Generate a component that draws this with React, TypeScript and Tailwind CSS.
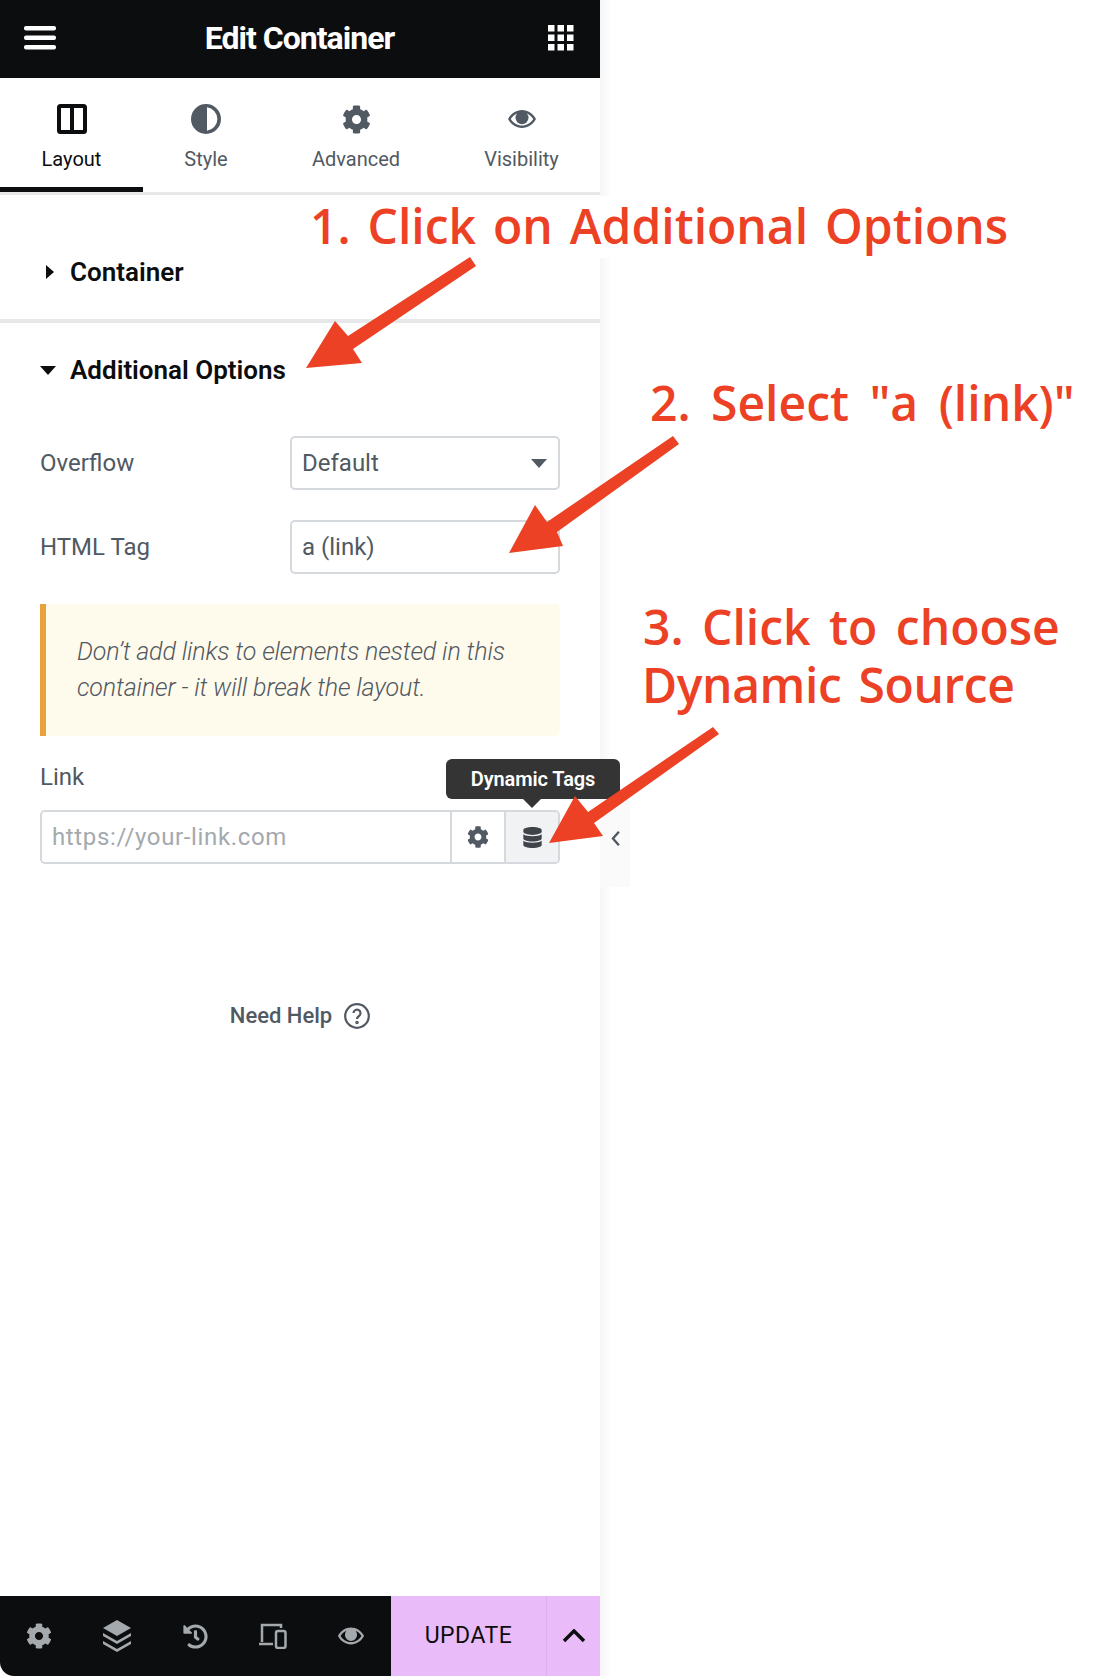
import type { ReactNode } from "react";
import { FaCog, FaDatabase, FaHistory } from "react-icons/fa";

const Eye = ({ className }: { className: string }) => (
  <svg viewBox="0 0 30 20" className={className} fill="currentColor">
    <path fillRule="evenodd" d="M15 1c6 0 11 3.500 14 9-3 5.500-8 9-14 9S4 15.500 1 10c3-5.500 8-9 14-9zM3.800 10c2.500 3.900 6.500 6.500 11.200 6.500S23.700 13.900 26.200 10c-1.600-2.500-3.700-4.400-6.300-5.500a6.500 6.500 0 1 1-9.800 0C7.500 5.600 5.400 7.500 3.800 10z" />
  </svg>
);

function Tab({ label, width, active, children }: { label: string; width: string; active?: boolean; children: ReactNode }) {
  return (
    <div className={`${width} flex flex-col items-center pt-[26px] border-b-[5px] ${active ? "border-[#0c0d0e] text-[#0c0d0e]" : "border-transparent text-[#515962]"}`}>
      <div className="h-[30px] flex items-center justify-center">{children}</div>
      <div className="mt-[11px] text-[20px] leading-[28px]">{label}</div>
    </div>
  );
}

export default function App() {
  return (
    <div className="relative w-[1099px] h-[1676px] bg-white overflow-hidden font-['Roboto',sans-serif]">
      <div className="absolute left-[600px] top-0 w-[12px] h-full bg-gradient-to-r from-[#f6f6f6] to-white" />
      <div className="absolute left-[600px] top-[789px] w-[30px] h-[98px] bg-[#fafafa] flex items-center justify-center">
        <svg viewBox="0 0 12 20" className="w-[11px] h-[17px] text-[#515962]" fill="none" stroke="currentColor" strokeWidth="2.800"><path d="M10 2 3 10l7 8" /></svg>
      </div>

      <div className="relative w-[600px] h-full flex flex-col bg-white">
        <header className="h-[78px] bg-[#0c0d0e] flex items-center justify-between pl-[24px] pr-[26px] pb-[2px] text-white shrink-0">
          <svg viewBox="0 0 32 24" className="w-[32px] h-[24px]" fill="currentColor">
            <rect y="0" width="32" height="4.500" rx="2" /><rect y="9.500" width="32" height="4.500" rx="2" /><rect y="19" width="32" height="4.500" rx="2" />
          </svg>
          <h1 className="text-[32px] font-bold tracking-[-1px] mb-[1px] mr-[5px]">Edit Container</h1>
          <svg viewBox="0 0 26 26" className="w-[26px] h-[26px]" fill="currentColor">
            {[0, 9.500, 19].flatMap((y) => [0, 9.500, 19].map((x) => <rect key={`${x}-${y}`} x={x} y={y} width="6.500" height="6.500" />))}
          </svg>
        </header>

        <nav className="flex border-b-[3px] border-[#e6e8ea] shrink-0 h-[117px]">
          <Tab label="Layout" width="w-[143px]" active>
            <svg viewBox="0 0 30 30" className="w-[30px] h-[30px]" fill="none" stroke="currentColor" strokeWidth="4"><rect x="2" y="2" width="26" height="26" rx="1.500" /><path d="M15 2v26" /></svg>
          </Tab>
          <Tab label="Style" width="w-[126px]">
            <svg viewBox="0 0 30 30" className="w-[30px] h-[30px]" fill="currentColor"><path fillRule="evenodd" d="M15 0a15 15 0 1 0 0 30 15 15 0 0 0 0-30zm1 3.200a11.900 11.900 0 0 1 0 23.600z" /></svg>
          </Tab>
          <Tab label="Advanced" width="w-[174px]">
            <FaCog className="w-[29px] h-[29px]" />
          </Tab>
          <Tab label="Visibility" width="w-[157px]">
            <Eye className="w-[30px] h-[20px]" />
          </Tab>
        </nav>

        <section className="h-[128px] border-b-[4px] border-[#e6e8ea] flex items-center pl-[46px] pt-[30px] shrink-0">
          <svg viewBox="0 0 8 14" className="w-[8px] h-[14px] text-[#0c0d0e]" fill="currentColor"><path d="M0 0l8 7-8 7z" /></svg>
          <span className="ml-[16px] text-[26px] font-semibold text-[#0c0d0e]">Container</span>
        </section>

        <section className="px-[40px] pt-[27px] shrink-0">
          <div className="flex items-center h-[40px]">
            <svg viewBox="0 0 16 9" className="w-[16px] h-[9px] text-[#0c0d0e]" fill="currentColor"><path d="M0 0h16l-8 9z" /></svg>
            <span className="ml-[14px] text-[26px] font-semibold text-[#0c0d0e]">Additional Options</span>
          </div>

          <div className="mt-[46px] flex items-center justify-between">
            <span className="text-[24px] text-[#515962]">Overflow</span>
            <div className="w-[270px] h-[54px] rounded-[5px] border-2 border-[#d5d8dc] flex items-center justify-between pl-[10px] pr-[11px] text-[24px] text-[#515962]">
              Default
              <svg viewBox="0 0 16 9" className="w-[16px] h-[9px]" fill="currentColor"><path d="M0 0h16l-8 9z" /></svg>
            </div>
          </div>

          <div className="mt-[30px] flex items-center justify-between">
            <span className="text-[24px] text-[#515962]">HTML Tag</span>
            <div className="w-[270px] h-[54px] rounded-[5px] border-2 border-[#d5d8dc] flex items-center pl-[10px] text-[24px] text-[#515962]">a (link)</div>
          </div>

          <div className="mt-[30px] h-[132px] bg-[#fffbec] border-l-[6px] border-[#e9a23b] rounded-r-[5px] pl-[31px] flex items-center">
            <p className="text-[25px] leading-[36px] font-light italic text-[#515962] tracking-[-0.13px]">Don’t add links to elements nested in this<br />container - it will break the layout.</p>
          </div>

          <div className="mt-[24px] text-[24px] leading-[34px] text-[#515962]">Link</div>

          <div className="relative mt-[16px] h-[54px] rounded-[5px] border-2 border-[#d5d8dc] flex items-stretch">
            <div className="flex-1 flex items-center pl-[10px] text-[24px] tracking-[0.65px] text-[#a4a9ae]">https://your-link.com</div>
            <div className="w-[54px] border-l-2 border-[#d5d8dc] flex items-center justify-center text-[#515962]">
              <FaCog className="w-[22px] h-[22px]" />
            </div>
            <div className="w-[54px] border-l-2 border-[#d5d8dc] bg-[#f1f2f3] rounded-r-[3px] flex items-center justify-center text-[#3f444b]">
              <FaDatabase className="w-[19px] h-[21px]" />
            </div>
            <div className="absolute left-[404px] top-[-53px] w-[174px] h-[40px] rounded-[6px] bg-[#343434] text-white text-[20px] font-semibold tracking-[-0.1px] flex items-center justify-center">
              Dynamic Tags
              <div className="absolute left-[76px] bottom-[-9px] w-0 h-0 border-l-[10px] border-r-[10px] border-t-[10px] border-l-transparent border-r-transparent border-t-[#343434]" />
            </div>
          </div>
        </section>

        <div className="mt-[135px] flex items-center justify-center gap-[12px] text-[#515962] shrink-0">
          <span className="text-[22px] font-medium">Need Help</span>
          <svg viewBox="0 0 26 26" className="w-[26px] h-[26px]" fill="none" stroke="currentColor" strokeWidth="2.200">
            <circle cx="13" cy="13" r="11.800" />
            <path d="M9.500 10a3.500 3.500 0 1 1 5.500 3c-1.300.9-2 1.400-2 3" />
            <circle cx="13" cy="19.500" r="0.700" fill="currentColor" />
          </svg>
        </div>

        <footer className="mt-auto h-[80px] flex shrink-0">
          <div className="w-[391px] bg-[#0c0d0e] rounded-bl-[14px] grid grid-cols-[repeat(5,78px)] items-center justify-items-center text-[#a4a9ae]">
            <FaCog className="w-[26px] h-[26px]" />
            <svg viewBox="0 0 28 32" className="w-[28px] h-[32px]" fill="currentColor">
              <path d="M14 0l14 8-14 8L0 8z" />
              <path d="M0 13l14 8 14-8v3l-14 8-14-8zM0 21l14 8 14-8v3l-14 8-14-8z" />
            </svg>
            <FaHistory className="w-[25px] h-[25px]" />
            <svg viewBox="0 0 28 26" className="w-[28px] h-[26px]" fill="none" stroke="currentColor" strokeWidth="2.500">
              <path d="M3 19V2h19v3" />
              <path d="M0 21h14" />
              <rect x="17" y="8" width="9.500" height="17" rx="2" />
            </svg>
            <Eye className="w-[28px] h-[20px]" />
          </div>
          <div className="flex-1 bg-[#e9bcf9] flex items-stretch text-[#0c0d0e]">
            <div className="flex-1 flex items-center justify-center text-[23px] tracking-[0.5px]">UPDATE</div>
            <div className="w-[54px] border-l border-[#deaef0] flex items-center justify-center">
              <svg viewBox="0 0 24 14" className="w-[24px] h-[14px]" fill="none" stroke="currentColor" strokeWidth="3.500"><path d="M2 12 12 2l10 10" /></svg>
            </div>
          </div>
        </footer>
      </div>

      {/* annotations drawn over the screenshot */}
      <div className="absolute inset-0 text-[#ec4124] font-['Open_Sans',sans-serif] font-semibold text-[48px] pointer-events-none">
        <div className="absolute left-[310px] top-[196px] h-[62px] leading-[60px] bg-white whitespace-nowrap pr-2 [word-spacing:4.500px]">1. Click on Additional Options</div>
        <div className="absolute left-[650px] top-[374px] leading-[58px] whitespace-nowrap [word-spacing:8px]">2. Select "a (link)"</div>
        <div className="absolute left-[643px] top-[598px] leading-[58px] whitespace-nowrap [word-spacing:6px]">3. Click to choose</div>
        <div className="absolute left-[642px] top-[656px] leading-[58px] whitespace-nowrap tracking-[-0.4px] [word-spacing:5px]">Dynamic Source</div>
        <svg className="absolute inset-0" width="1099" height="1676" fill="#ec4124" stroke="none">
          <path d="M470 257 476 266 353 349 362 363 306 368 335 321 348 336z" />
          <path d="M673 436 679 444 557 532 563 546 509 553 535 505 547 522z" />
          <path d="M713 727 719 734 594 823 603 836 549 843 575 796 588 812z" />
        </svg>
      </div>
    </div>
  );
}
